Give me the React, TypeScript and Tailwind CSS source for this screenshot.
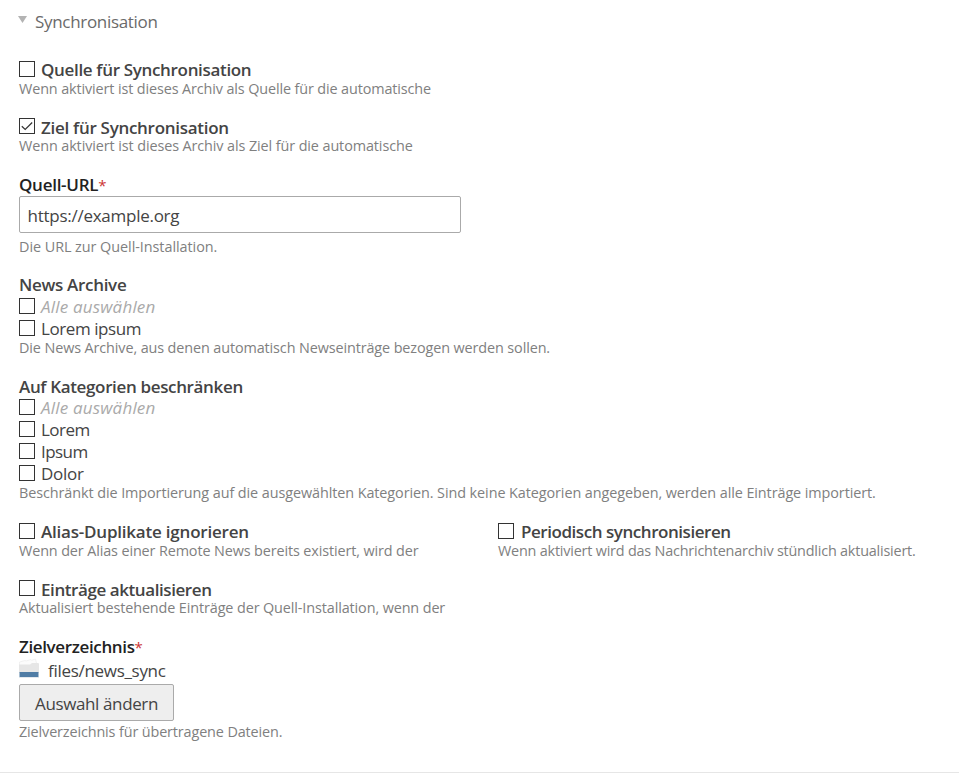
import type { ReactNode } from "react";

function Checkbox({ checked = false }: { checked?: boolean }) {
  return (
    <span role="checkbox" aria-checked={checked} className="mt-[2px] block size-4 shrink-0 border border-[#333] bg-white">
      {checked && (
        <svg viewBox="0 0 14 14" className="block size-[14px]" fill="none" stroke="#333" strokeWidth="1.2">
          <path d="M1.800 7.200 5.200 10.500 12.200 3.500" />
        </svg>
      )}
    </span>
  );
}

function CheckLine({ children, checked, className = "" }: { children: ReactNode; checked?: boolean; className?: string }) {
  return (
    <label className="flex h-[22px] items-start gap-[6px] leading-[22px]">
      <Checkbox checked={checked} />
      <span className={className}>{children}</span>
    </label>
  );
}

function Label({ children, className = "" }: { children: ReactNode; className?: string }) {
  return <h3 className={`h-[22px] font-semibold leading-[22px] ${className}`}>{children}</h3>;
}

function Hint({ children, className = "" }: { children: ReactNode; className?: string }) {
  return <p className={`h-[18px] text-[14.4px] leading-[18px] text-[#808080] ${className}`}>{children}</p>;
}

function Required() {
  return <span className="text-[15px] font-normal text-[#c33]">*</span>;
}

function FolderIcon() {
  return (
    <svg width="20" height="20" viewBox="0 0 20 20" className="-mt-px block shrink-0">
      <path d="M.5 8V4L6 2.500l1 .5L12 1.500l.5.8L16.500 1l1 4V8z" fill="#fcfcfc" stroke="#ececec" strokeWidth=".7" />
      <path d="M0 6.500h11l2-1.500h6q1 0 1 1V15H0z" fill="#e6e6e6" />
      <path d="M.5 14h19v5H.5z" fill="#4f7ca5" />
      <path d="M0 19h20v.8H0z" fill="#dde3e9" />
    </svg>
  );
}

export default function App() {
  return (
    <main className="h-[773px] w-[959px] overflow-hidden whitespace-nowrap border-b border-[#e6e6e6] bg-white pl-[19px] font-['Open_Sans','Noto_Sans',sans-serif] text-[17px] text-[#444]">
      <header className="flex h-[59px] pt-[11px] leading-[22px] text-[#6a6a6a]">
        <svg width="9" height="7" viewBox="0 0 9 7" className="mt-[5px] mr-[8px] -ml-px">
          <path d="M0 0h9L4.5 7z" fill="#b3b3b3" />
        </svg>
        <h2 className="tracking-[-0.31px]">Synchronisation</h2>
      </header>

      <section className="h-[57px]">
        <CheckLine className="font-semibold tracking-[-0.33px]">Quelle für Synchronisation</CheckLine>
        <Hint className="-mt-px tracking-[-0.12px]">Wenn aktiviert ist dieses Archiv als Quelle für die automatische</Hint>
      </section>

      <section className="h-[57px]">
        <CheckLine checked className="pt-[2px] font-semibold leading-[20px] tracking-[-0.29px]">Ziel für Synchronisation</CheckLine>
        <Hint className="-mt-px tracking-[-0.1px]">Wenn aktiviert ist dieses Archiv als Ziel für die automatische</Hint>
      </section>

      <section className="h-[101px]">
        <Label className="pt-px tracking-[-0.27px] text-[#222]">Quell-URL<Required /></Label>
        <div className="mt-px flex h-[37px] w-[442px] items-center rounded-[2px] border border-[#aaa] px-[7.5px] pt-[2px]">
          <span className="tracking-[-0.26px]">https://example.org</span>
        </div>
        <Hint className="mt-[5px] tracking-[-0.05px]">Die URL zur Quell-Installation.</Hint>
      </section>

      <section className="h-[102px]">
        <Label className="tracking-[-0.31px]">News Archive</Label>
        <CheckLine className="italic tracking-[0.19px] text-[#aaa]">Alle auswählen</CheckLine>
        <CheckLine className="tracking-[-0.42px]">Lorem ipsum</CheckLine>
        <Hint className="-mt-px tracking-[-0.11px]">Die News Archive, aus denen automatisch Newseinträge bezogen werden sollen.</Hint>
      </section>

      <section className="h-[145px]">
        <Label className="mb-[-1px] tracking-[-0.35px]">Auf Kategorien beschränken</Label>
        <CheckLine className="italic tracking-[0.19px] text-[#aaa]">Alle auswählen</CheckLine>
        <CheckLine className="tracking-[-0.55px]">Lorem</CheckLine>
        <CheckLine className="tracking-[-0.55px]">Ipsum</CheckLine>
        <CheckLine className="tracking-[-0.25px]">Dolor</CheckLine>
        <Hint className="-mt-px tracking-[-0.08px]">Beschränkt die Importierung auf die ausgewählten Kategorien. Sind keine Kategorien angegeben, werden alle Einträge importiert.</Hint>
      </section>

      <div className="grid h-[57px] grid-cols-[479px_1fr]">
        <section>
          <CheckLine className="font-semibold tracking-[-0.21px]">Alias-Duplikate ignorieren</CheckLine>
          <Hint className="-mt-px tracking-[-0.12px]">Wenn der Alias einer Remote News bereits existiert, wird der</Hint>
        </section>
        <section>
          <CheckLine className="pl-px font-semibold tracking-[-0.45px]">Periodisch synchronisieren</CheckLine>
          <Hint className="-mt-px tracking-[-0.2px]">Wenn aktiviert wird das Nachrichtenarchiv stündlich aktualisiert.</Hint>
        </section>
      </div>

      <section className="h-[57px]">
        <CheckLine className="pt-[2px] font-semibold leading-[20px] tracking-[-0.42px]">Einträge aktualisieren</CheckLine>
        <Hint className="-mt-px tracking-[-0.11px]">Aktualisiert bestehende Einträge der Quell-Installation, wenn der</Hint>
      </section>

      <section>
        <Label className="pt-px tracking-[-0.36px] text-[#222]">Zielverzeichnis<Required /></Label>
        <div className="mt-[2px] flex h-[25px] items-start gap-[9px] leading-[24px]">
          <FolderIcon />
          <span className="tracking-[-0.3px]">files/news_sync</span>
        </div>
        <button className="block h-[37px] w-[155px] rounded-[2px] border border-[#aaa] bg-[#eee] pt-[2px] leading-[33px]">
          <span className="tracking-[-0.38px]">Auswahl ändern</span>
        </button>
        <Hint className="mt-[2px] tracking-[-0.125px]">Zielverzeichnis für übertragene Dateien.</Hint>
      </section>
    </main>
  );
}
